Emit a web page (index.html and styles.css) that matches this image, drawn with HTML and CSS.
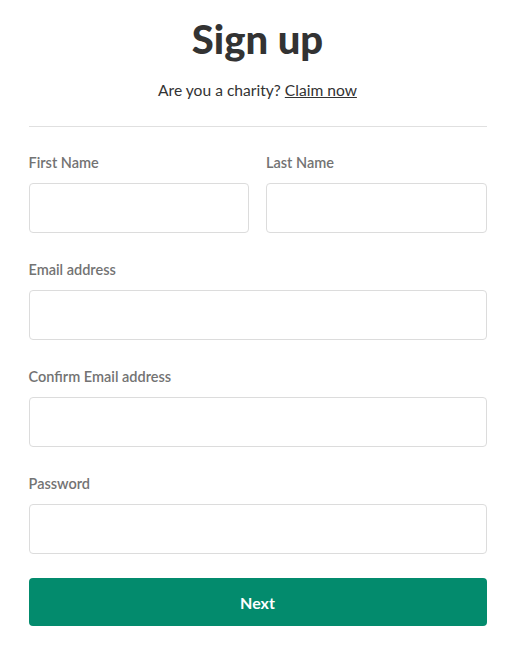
FILE: index.html
```html
<!DOCTYPE html>
<html>
<head>
<meta charset="utf-8">
<link rel="stylesheet" href="styles.css">
</head>
<body>
<div class="wrap">
  <h1 class="title">Sign up</h1>
  <p class="sub">Are you a charity? <a href="#" class="claim">Claim now</a></p>
  <hr class="rule">
  <form class="form">
    <div class="row">
      <div class="field">
        <label class="label">First Name</label>
        <input class="input" type="text">
      </div>
      <div class="field">
        <label class="label">Last Name</label>
        <input class="input" type="text">
      </div>
    </div>
    <div class="field">
      <label class="label">Email address</label>
      <input class="input" type="email">
    </div>
    <div class="field">
      <label class="label">Confirm Email address</label>
      <input class="input" type="email">
    </div>
    <div class="field">
      <label class="label">Password</label>
      <input class="input" type="password">
    </div>
    <button class="btn" type="button">Next</button>
  </form>
</div>
</body>
</html>
```
FILE: styles.css
```css
html, body {
  margin: 0;
  padding: 0;
  background: #fff;
}
body {
  font-family: Lato, "Open Sans", sans-serif;
  color: #333;
}
.wrap {
  width: 458px;
  margin: 0 auto;
  padding-top: 15px;
}
.title {
  margin: 0;
  text-align: center;
  font-size: 40px;
  line-height: 48px;
  font-weight: 900;
  color: #333;
}
.sub {
  margin: 17px 0 0;
  text-align: center;
  font-size: 15.6px;
  line-height: 20px;
  color: #333;
}
.claim {
  color: #333;
  text-decoration: underline;
}
.rule {
  margin: 26px 0 0;
  border: 0;
  border-top: 1px solid #e0e0e0;
}
.form {
  display: flex;
  flex-direction: column;
  gap: 27px;
  padding-top: 26px;
}
.row {
  display: flex;
  gap: 17px;
}
.row .field {
  flex: 1;
}
.field {
  display: flex;
  flex-direction: column;
}
.label {
  font-size: 14.5px;
  line-height: 20px;
  font-weight: 600;
  color: #737373;
  margin-bottom: 10px;
}
.input {
  box-sizing: border-box;
  height: 50px;
  width: 100%;
  border: 1px solid #dcdcdc;
  border-radius: 4px;
  background: #fff;
  margin: 0;
}
.btn {
  margin-top: -3px;
  height: 48px;
  border: 0;
  border-radius: 4px;
  background: #038b6d;
  color: #fff;
  font-family: Lato, sans-serif;
  font-size: 16px;
  font-weight: 700;
}
```
